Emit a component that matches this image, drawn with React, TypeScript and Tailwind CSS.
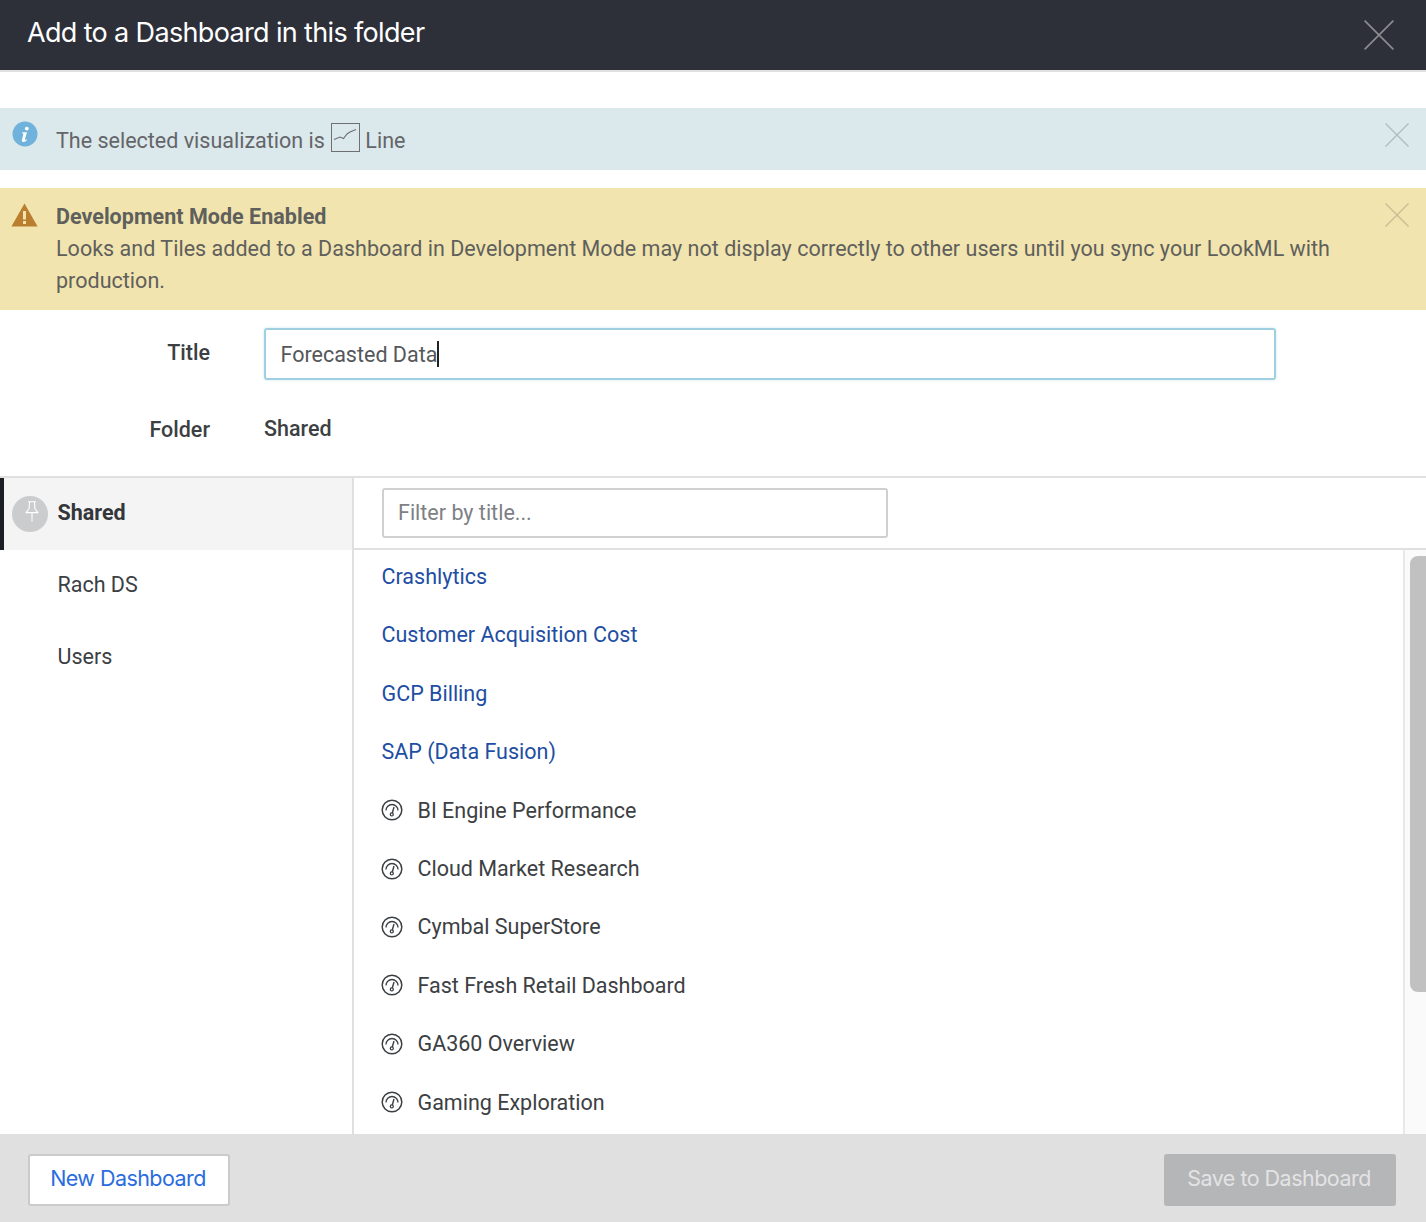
const LINKS = ["Crashlytics", "Customer Acquisition Cost", "GCP Billing", "SAP (Data Fusion)"];
const DASHBOARDS = [
  "BI Engine Performance",
  "Cloud Market Research",
  "Cymbal SuperStore",
  "Fast Fresh Retail Dashboard",
  "GA360 Overview",
  "Gaming Exploration",
];

function CloseIcon({ className }: { className: string }) {
  return (
    <svg className={className} viewBox="0 0 24 24" fill="none" stroke="currentColor" strokeWidth="1.4">
      <path d="M0.5 0.5L23.5 23.5M23.5 0.5L0.5 23.5" />
    </svg>
  );
}

function GaugeIcon() {
  return (
    <svg className="w-[22px] h-[22px] shrink-0 -ml-[0.5px] -mt-[1px]" viewBox="0 0 22 22" fill="none" stroke="#3c4043">
      <circle cx="11" cy="11" r="9.8" strokeWidth="1.5" />
      <path d="M5 11.5A6 6 0 0 1 17 11.5" strokeWidth="1.3" />
      <path d="M13 8L11.3 14" strokeWidth="1.4" />
      <circle cx="10.8" cy="15.4" r="1.5" strokeWidth="1.3" />
    </svg>
  );
}

export default function App() {
  return (
    <div className="h-[1222px] w-full flex flex-col overflow-hidden bg-white font-['Roboto',sans-serif] text-[21.5px] text-[#3c4043]">
      <header className="h-[72px] shrink-0 flex items-center justify-between pl-[27px] pr-[32px] pb-[4px] bg-[#2d2f39] border-b-2 border-[#e0e0e0]">
        <h1 className="text-[27px] text-white font-['Inter',sans-serif] tracking-[-0.65px]">Add to a Dashboard in this folder</h1>
        <CloseIcon className="w-[30px] h-[30px] text-[#8a8b91] mt-[4px]" />
      </header>

      <div className="mt-[36px] h-[62px] shrink-0 flex items-start bg-[#dbe8ec] pl-[12px] pr-[16px]">
        <svg className="w-[26px] h-[26px] shrink-0 mt-[13px]" viewBox="0 0 26 26">
          <circle cx="13" cy="13" r="12.5" fill="#6fb3dc" />
          <circle cx="14.8" cy="7.6" r="1.9" fill="#fff" />
          <path d="M10.4 11.2H15L12.9 18.6C12.8 19.2 13.5 19.2 14.6 18.3L14.9 19C13.6 20.6 12.4 21 11.2 21C10 21 9.6 20.2 9.9 19.1L11.5 12.7L10.3 12.4Z" fill="#fff" />
        </svg>
        <div className="ml-[18px] mt-[15px] flex items-start text-[#646568] leading-[32px]">
          <span className="mt-[2px]">The selected visualization is</span>
          <svg className="w-[29px] h-[29px] ml-[6px] mr-[5.5px] shrink-0" viewBox="0 0 29 29" fill="none" stroke="#6f7072">
            <rect x="0.5" y="0.5" width="28" height="28" strokeWidth="1" />
            <path d="M3 16.5L9 14L12.5 15.5L16 11L19 9L25 6.5" strokeWidth="1.1" />
          </svg>
          <span className="mt-[2px]">Line</span>
        </div>
        <CloseIcon className="w-[24px] h-[24px] text-[#b1bcbf] ml-auto mt-[15px] mr-[1px]" />
      </div>

      <div className="mt-[18px] h-[122px] shrink-0 flex items-start bg-[#f1e4ae] pl-[11px] pr-[16px]">
        <svg className="w-[27px] h-[24px] shrink-0 mt-[15px]" viewBox="0 0 27 24">
          <path d="M13.5 0.5L26.6 23.5H0.4Z" fill="#b97f2f" />
          <rect x="12" y="8" width="3" height="8.5" fill="#f1e4ae" />
          <rect x="12" y="18" width="3" height="3" fill="#f1e4ae" />
        </svg>
        <div className="ml-[18px] mt-[13px] w-[1290px] text-[#5f5f5c] leading-[32px] tracking-[0.025px]">
          <div className="font-bold">Development Mode Enabled</div>
          <div>Looks and Tiles added to a Dashboard in Development Mode may not display correctly to other users until you sync your LookML with production.</div>
        </div>
        <CloseIcon className="w-[24px] h-[24px] text-[#c7bd96] ml-auto mt-[15px] mr-[1px] shrink-0" />
      </div>

      <div className="mt-[18px] flex items-center shrink-0">
        <label className="w-[210px] text-right font-medium mb-[1px]">Title</label>
        <div className="ml-[54px] w-[1012px] h-[52px] flex items-center pl-[14.5px] pr-[16px] rounded-[3px] border-2 border-[#9fcfe0] shadow-[0_0_3px_#cfe7ef] text-[#55575a]">
          <span className="mt-[2px]">Forecasted Data</span>
          <span className="w-[1.5px] h-[26px] bg-[#222]" />
        </div>
      </div>

      <div className="mt-[26px] flex items-center shrink-0 h-[46px]">
        <label className="w-[210px] text-right font-medium mt-[3px]">Folder</label>
        <span className="ml-[54px] font-medium">Shared</span>
      </div>

      <div className="mt-[24px] flex-1 min-h-0 flex border-t-2 border-[#e0e0e0]">
        <aside className="w-[354px] shrink-0 border-r-2 border-[#e0e0e0]">
          <div className="h-[72px] flex items-center bg-[#f4f4f4] border-l-4 border-[#1c1e25] pl-[8px] pb-[2px]">
            <span className="w-[36px] h-[36px] rounded-full bg-[#cbcccd] flex justify-center pl-[4px] pt-[5px] mt-[2px]">
              <svg className="w-[16px] h-[21px]" viewBox="0 0 16 21" fill="none" stroke="#fff" strokeWidth="1.1">
                <path d="M4 0.8H12M5.6 0.8L5.1 7.5C4.8 9 3 10 2.2 11.6H13.8C13 10 11.2 9 10.9 7.5L10.4 0.8M8 11.6V20.5" />
              </svg>
            </span>
            <span className="ml-[9.5px] font-bold text-[#33363a]">Shared</span>
          </div>
          <div className="h-[72px] flex items-center pl-[57.5px] pb-[2px]">Rach DS</div>
          <div className="h-[72px] flex items-center pl-[57.5px] pb-[2px]">Users</div>
        </aside>

        <div className="flex-1 min-w-0 flex flex-col">
          <div className="h-[72px] shrink-0 pl-[28px] pt-[10px] border-b-2 border-[#e0e0e0]">
            <div className="w-[506px] h-[50px] flex items-center px-[14px] rounded-[3px] border-2 border-[#d0d0d0] text-[#7d8084]">Filter by title...</div>
          </div>
          <div className="flex-1 min-h-0 flex">
            <ul className="flex-1 pl-[27.5px] -mt-[2px] overflow-hidden">
              {LINKS.map((name) => (
                <li key={name} className="h-[58.4px] flex items-center text-[#1d4ea3]">{name}</li>
              ))}
              {DASHBOARDS.map((name) => (
                <li key={name} className="h-[58.4px] flex items-center gap-[14.5px]">
                  <GaugeIcon />
                  <span>{name}</span>
                </li>
              ))}
            </ul>
            <div className="w-[23px] shrink-0 bg-[#fafafa] border-l-2 border-[#e8e8e8] pl-[5px] pt-[6px]">
              <div className="h-[436px] rounded-l-[8px] bg-[#c1c1c1]" />
            </div>
          </div>
        </div>
      </div>

      <footer className="h-[88px] shrink-0 flex items-center justify-between bg-[#e0e0e0] pl-[28px] pr-[30px] pt-[4px]">
        <button className="w-[202px] h-[52px] pb-[4px] pr-[2px] rounded-[3px] bg-white border-2 border-[#cbcbcb] text-[#2a6ce0] font-['Inter',sans-serif] text-[21.5px] tracking-[-0.55px]">New Dashboard</button>
        <button className="w-[232px] h-[52px] pb-[4px] pr-[2px] rounded-[3px] bg-[#b5b6b8] text-[#e3e3e4] font-['Inter',sans-serif] text-[21.5px] tracking-[-0.52px]">Save to Dashboard</button>
      </footer>
    </div>
  );
}
